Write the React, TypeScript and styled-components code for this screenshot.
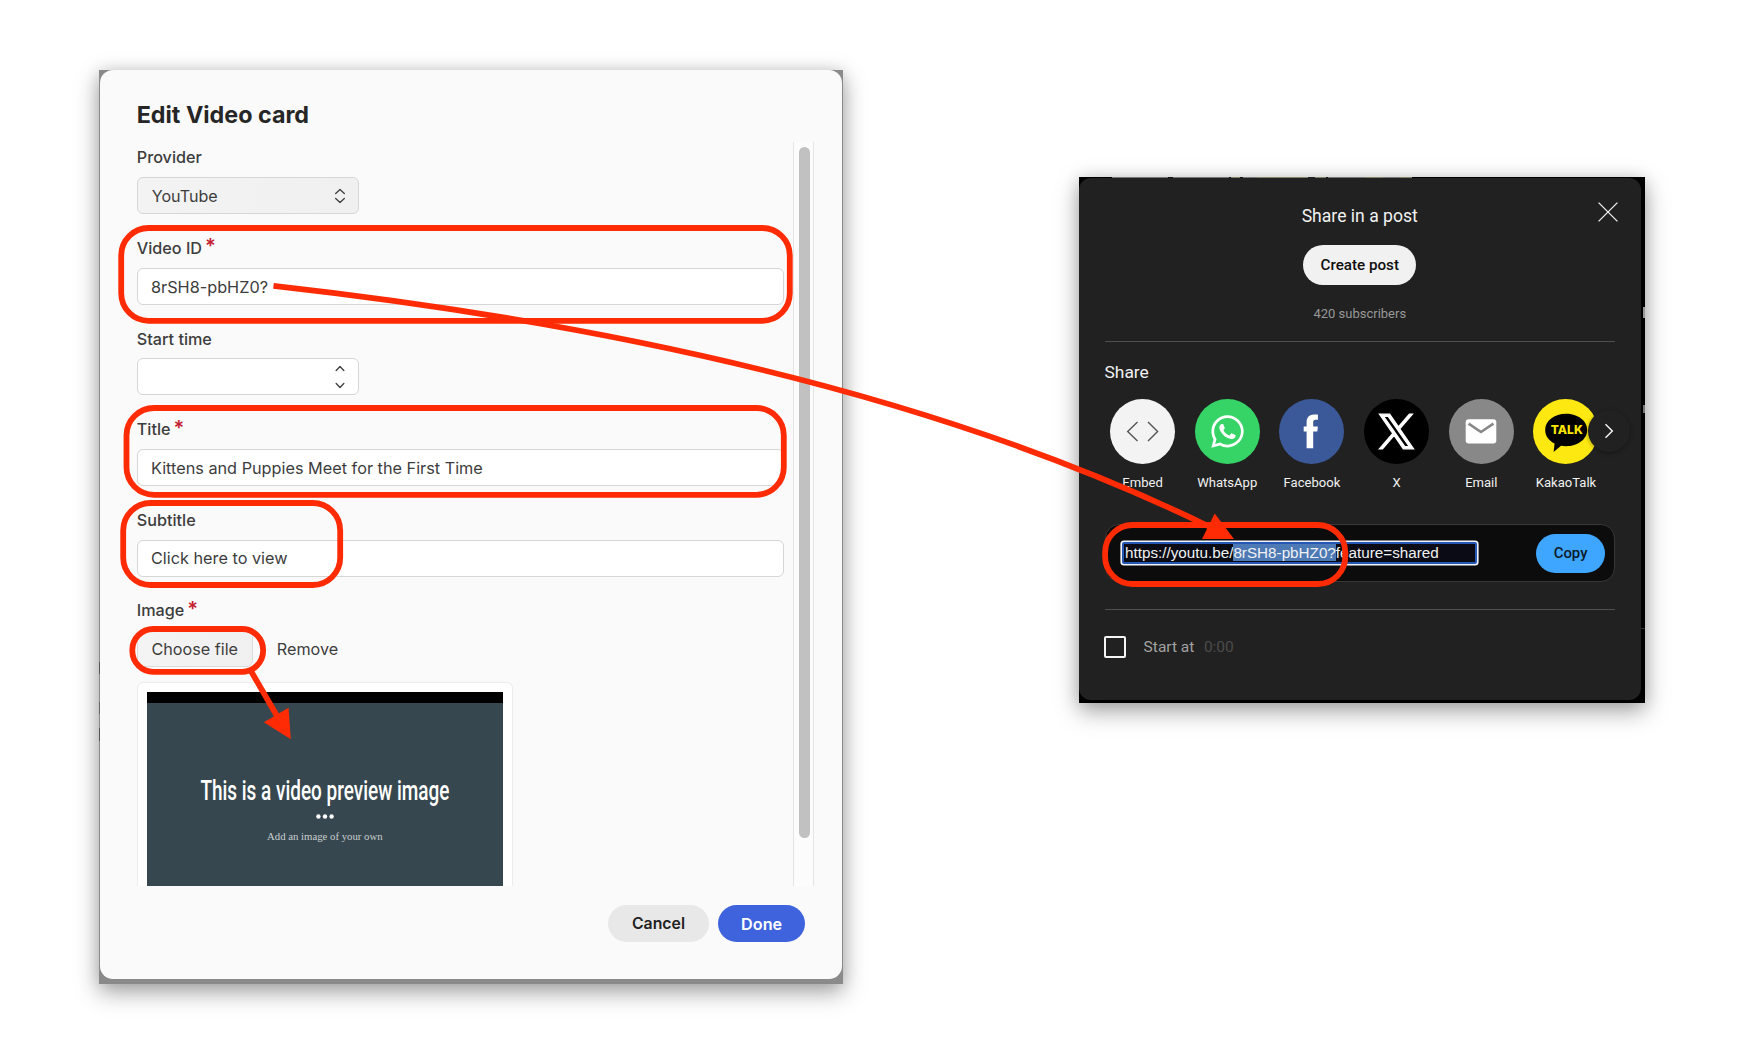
import React from 'react';
import styled, { createGlobalStyle } from 'styled-components';
import { FaWhatsapp } from 'react-icons/fa';

const RED = '#fe2b04';

const GlobalStyle = createGlobalStyle`
  * { box-sizing: border-box; }
  body { margin: 0; background: #fff; }
`;

const Stage = styled.main`
  position: relative;
  display: flex;
  align-items: flex-start;
  gap: 236px;
  width: 1759px;
  height: 1047px;
  padding: 70px 0 0 99px;
  overflow: hidden;
  background: #fff;
`;

/* ---------- Edit Video card ---------- */

const EditCapture = styled.section`
  width: 744px;
  height: 914px;
  padding: 0 1px 5px;
  background:
    linear-gradient(#555, #555) 0 592px / 1px 12px no-repeat,
    linear-gradient(#666, #666) 0 632px / 1px 12px no-repeat,
    linear-gradient(#555, #555) 0 658px / 1px 13px no-repeat,
    #8a8a8a;
  box-shadow: 0 8px 22px rgba(0, 0, 0, 0.36), 0 0 14px rgba(0, 0, 0, 0.1);
  font-family: Inter, "Liberation Sans", sans-serif;
  color: #3d3d3d;
`;

const EditDialog = styled.div`
  display: flex;
  flex-direction: column;
  height: 909px;
  border-radius: 13px;
  background: #fafafa;
`;

const DialogTitle = styled.h1`
  height: 72px;
  margin: 0;
  padding: 32px 0 0 36.7px;
  font-size: 23.3px;
  font-weight: 700;
  line-height: 25px;
  color: #262626;
`;

const DialogBody = styled.div`
  display: flex;
  height: 744px;
`;

const Form = styled.div`
  width: 693px;
  padding: 5.4px 0 0 36.8px;
  overflow: hidden;
`;

const Field = styled.div`
  display: flex;
  flex-direction: column;
  gap: 9.8px;
  width: 647px;
  margin-bottom: 23.8px;
`;

const FieldLabel = styled.label`
  font-size: 16.2px;
  font-weight: 500;
  line-height: 20px;
  height: 20px;
  white-space: nowrap;
`;

const Required = styled.span`
  position: relative;
  top: -0.5px;
  margin-left: 3px;
  font-size: 20px;
  font-weight: 600;
  line-height: 0;
  color: #c5202f;
`;

const Control = styled.div<{ $narrow?: boolean; $select?: boolean }>`
  display: flex;
  align-items: center;
  justify-content: space-between;
  width: ${(p) => (p.$narrow ? '222.5px' : '100%')};
  height: 37px;
  padding: 0.6px 13.3px 0 ${(p) => (p.$select ? '13.9px' : '13.2px')};
  border: 1px solid #d6d6d6;
  border-radius: 6px;
  background: ${(p) => (p.$select ? 'linear-gradient(90deg, #f3f3f3, #f0f0f0)' : '#fff')};
  font-size: ${(p) => (p.$select ? '16.1px' : '16.25px')};
  white-space: nowrap;
`;

const FileRow = styled.div`
  display: flex;
  align-items: center;
  height: 37px;
  font-size: 16.2px;
`;

const ChooseButton = styled.span`
  width: 116px;
  height: 37px;
  padding-left: 13.6px;
  border: 1px solid #dcdcdc;
  border-radius: 6px;
  background: linear-gradient(90deg, #f4f4f4, #f0f0f0);
  line-height: 36px;
`;

const RemoveButton = styled.span`
  margin-left: 24px;
`;

const PreviewFrame = styled.div`
  width: 376px;
  height: 230px;
  margin-top: -9.1px;
  padding: 9px;
  border: 1px solid #ececec;
  border-radius: 6px;
  background: #fff;
`;

const Preview = styled.div`
  display: flex;
  flex-direction: column;
  align-items: center;
  height: 211px;
  border-top: 11px solid #000;
  background: #37474f;
  color: #fff;
`;

const PreviewTitle = styled.div`
  margin-top: 72px;
  font: 500 28px/32px Roboto, "Liberation Sans", sans-serif;
  white-space: nowrap;
  transform: scaleX(0.677);
`;

const PreviewDots = styled.svg`
  display: block;
  width: 18px;
  height: 5px;
  margin-top: 7.2px;
`;

const PreviewCaption = styled.div`
  margin-top: 8.8px;
  font: 10.75px/16px "Liberation Serif", serif;
  color: #c9ced0;
`;

const Track = styled.div`
  width: 21px;
  padding: 5px 0 0 4.5px;
  border: solid #e4e4e4;
  border-width: 0 1px;
  background: #fcfcfc;
`;

const Thumb = styled.div`
  width: 11.5px;
  height: 690.5px;
  border-radius: 6px;
  background: #c1c1c1;
`;

const DialogFooter = styled.footer`
  display: flex;
  justify-content: flex-end;
  gap: 9px;
  padding: 19px 36.8px 0 0;
`;

const PillButton = styled.button<{ $primary?: boolean }>`
  width: ${(p) => (p.$primary ? '87.2px' : '101px')};
  height: 37px;
  padding: 0;
  border: 0;
  border-radius: 19px;
  background: ${(p) => (p.$primary ? '#3e63dd' : '#e8e8e8')};
  color: ${(p) => (p.$primary ? '#fff' : '#222')};
  font: ${(p) => (p.$primary ? '600 16.2px' : '600 15.8px')} Inter, "Liberation Sans", sans-serif;
`;

/* ---------- Share panel ---------- */

const ShareCapture = styled.section`
  width: 566px;
  height: 526px;
  margin-top: 107px;
  padding-right: 4px;
  background:
    linear-gradient(#999, #999) 564px 130px / 2px 11px no-repeat,
    linear-gradient(#777, #777) 564px 228px / 2px 8px no-repeat,
    linear-gradient(#333, #333) 562px 451px / 4px 1px no-repeat,
    #000;
  box-shadow: 0 8px 22px rgba(0, 0, 0, 0.36), 0 0 14px rgba(0, 0, 0, 0.1);
  font-family: Roboto, "Liberation Sans", sans-serif;
  color: #f1f1f1;
`;

const PageStrip = styled.div`
  width: 300px;
  height: 1px;
  margin-left: 33px;
  background: linear-gradient(
    90deg,
    #777 0 56px, #111 56px 61px, #777 61px 117px, #111 117px 119px, #85836a 119px 128px,
    #111 128px 131px, #777 131px 145px, #85836a 145px 196px, #222 196px 203px, #85836a 203px 214px,
    #111 214px 216px, #777 216px 253px, #85836a 253px 271px, #777 271px 288px, #85836a 288px
  );
`;

const SharePanel = styled.div`
  position: relative;
  display: flex;
  flex-direction: column;
  align-items: center;
  height: 522px;
  padding: 27.3px 26px 0 25.5px;
  border-radius: 12px;
  background: #212121;
`;

const CloseIcon = styled.svg`
  position: absolute;
  top: 23.7px;
  right: 22.8px;
  width: 20px;
  height: 20px;
`;

const ShareTitle = styled.h2`
  margin: 0;
  font-size: 17.6px;
  font-weight: 400;
  line-height: 22px;
`;

const CreatePost = styled.button`
  width: 113px;
  height: 39.5px;
  margin-top: 17.9px;
  padding: 0;
  border: 0;
  border-radius: 20px;
  background: #f1f1f1;
  font: 500 15.2px Roboto, sans-serif;
  color: #0f0f0f;
`;

const Subscribers = styled.div`
  margin-top: 21px;
  font-size: 13px;
  line-height: 16px;
  color: #989898;
`;

const Divider = styled.hr<{ $top: number }>`
  flex: none;
  width: 100%;
  height: 1px;
  margin: ${(p) => p.$top}px 0 0;
  border: 0;
  background: #505050;
`;

const ShareHeading = styled.h3`
  align-self: flex-start;
  margin: 18.4px 0 0 0;
  font-size: 17.4px;
  font-weight: 400;
  line-height: 22px;
`;

const Targets = styled.div`
  position: relative;
  align-self: flex-start;
  display: flex;
  margin: 16.2px 0 0 -4.3px;
`;

const Target = styled.div`
  display: flex;
  flex-direction: column;
  align-items: center;
  gap: 11.2px;
  width: 84.7px;
  font-size: 13.05px;
  line-height: 16px;
`;

const Disc = styled.div<{ $color: string }>`
  display: flex;
  align-items: center;
  justify-content: center;
  width: 65px;
  height: 65px;
  border-radius: 50%;
  background: ${(p) => p.$color};
  color: #fff;
  svg { display: block; }
`;

const NextButton = styled.div`
  position: absolute;
  left: 487.3px;
  top: 11.5px;
  display: flex;
  align-items: center;
  justify-content: center;
  width: 42px;
  height: 42px;
  border-radius: 50%;
  background: #212121;
  box-shadow: 0 1px 4px rgba(0, 0, 0, 0.35);
`;

const LinkBox = styled.div`
  display: flex;
  align-items: center;
  justify-content: space-between;
  flex: none;
  width: 100%;
  height: 58px;
  margin-top: 33.2px;
  padding: 0 8.7px 0 16.6px;
  border: 1px solid #383838;
  border-radius: 14px;
  background: #0c0c0c;
`;

const LinkInput = styled.div`
  width: 354.5px;
  height: 22px;
  padding-left: 0.9px;
  border: 2px solid #2458b4;
  border-radius: 2px;
  box-shadow: 0 0 0 1.6px #f2f4fa;
  background: #0a0b14;
  font: 15.24px/18px "Liberation Sans", Arial, sans-serif;
  white-space: nowrap;
`;

const Selected = styled.span`
  background: #4d79b5;
`;

const CopyButton = styled.button`
  width: 69.5px;
  height: 39px;
  padding: 0;
  border: 0;
  border-radius: 20px;
  background: #3ea6ff;
  font: 500 14.9px Roboto, sans-serif;
  color: #0c1a28;
`;

const StartRow = styled.div`
  align-self: flex-start;
  display: flex;
  align-items: center;
  margin-top: 26.2px;
  font-size: 15.5px;
  color: #a2a2a2;
`;

const Checkbox = styled.span`
  width: 22px;
  height: 22px;
  margin: 0 17.3px 0 -0.2px;
  border: 2px solid #f5f5f5;
  border-radius: 2px;
`;

const StartTime = styled.span`
  margin-left: 9.5px;
  color: #4c4c4c;
`;

/* ---------- Annotation layer ---------- */

const Markup = styled.svg`
  position: absolute;
  inset: 0;
  width: 1759px;
  height: 1047px;
  pointer-events: none;
`;

const Chevrons = ({ spread, width }: { spread: number; width: number }) => {
  const w = width / 2;
  return (
    <svg width="10" height="28" viewBox="-5 -14 10 28" fill="none" stroke="#444" strokeWidth="1.4" strokeLinecap="round" strokeLinejoin="round">
      <path d={`M${-w} ${-spread + 4}L0 ${-spread}L${w} ${-spread + 4}`} />
      <path d={`M${-w} ${spread - 4}L0 ${spread}L${w} ${spread - 4}`} />
    </svg>
  );
};

const EmbedIcon = () => (
  <svg width="65" height="65" fill="none" stroke="#555" strokeWidth="1.4">
    <path d="M27.5 23L17.7 32.5L27.5 42M38 23L47.6 32.5L38 42" />
  </svg>
);

const FacebookIcon = () => (
  <svg width="65" height="65" fill="#fff">
    <path d="M27.6 49.3V32.6H24.7V27.4H27.6V23.4C27.6 18.5 30.3 15.6 35 15.6H38.9V20.8H36.6C34.7 20.8 34.2 21.8 34.2 23.6V27.4H38.9L38.3 32.6H34.2V49.3Z" />
  </svg>
);

const XIcon = () => (
  <svg width="37" height="37" viewBox="-40 -40 1280 1307" fill="#fff" stroke="#fff" strokeWidth="48">
    <path d="M714.163 519.284L1160.89 0H1055.03L667.137 450.887L357.328 0H0L468.492 681.821L0 1226.37H105.866L515.491 750.218L842.672 1226.37H1200L714.137 519.284ZM569.165 687.828L521.697 619.934L144.011 79.6944H306.615L611.412 515.685L658.88 583.579L1055.08 1150.3H892.476L569.165 687.828Z" />
  </svg>
);

const EmailIcon = () => (
  <svg width="65" height="65">
    <rect x="16.7" y="20.2" width="30.6" height="24.2" rx="3" fill="#fff" />
    <path d="M19.6 24.6L32 33L44.4 24.6" fill="none" stroke="#888" strokeWidth="2.6" />
  </svg>
);

const KakaoIcon = () => (
  <svg width="65" height="65">
    <path d="M33 14.8C44.8 14.8 54.2 21.8 54.2 31C54.2 40.2 44.8 47.2 33 47.2C31.2 47.2 29.6 47.1 28 46.8L20.6 53L21.6 44.6C15.8 41.8 12.2 36.9 12.2 31C12.2 21.8 21.3 14.8 33 14.8Z" fill="#000" />
    <text x="17.8" y="35.4" textLength="32" lengthAdjust="spacingAndGlyphs" fontFamily="Inter, sans-serif" fontWeight="800" fontSize="12.2" fill="#fbe600">TALK</text>
  </svg>
);

const targets = [
  { name: 'Embed', color: '#f3f3f3', icon: <EmbedIcon /> },
  { name: 'WhatsApp', color: '#36d366', icon: <FaWhatsapp size={37} /> },
  { name: 'Facebook', color: '#3b5998', icon: <FacebookIcon /> },
  { name: 'X', color: '#000', icon: <XIcon /> },
  { name: 'Email', color: '#888', icon: <EmailIcon /> },
  { name: 'KakaoTalk', color: '#fde812', icon: <KakaoIcon /> },
];

const outlines = [
  { x: 121.2, y: 228, w: 668.6, h: 92.8, r: 27.5 },
  { x: 126.5, y: 408, w: 657.3, h: 86.8, r: 27.5 },
  { x: 123.2, y: 503, w: 217, h: 82, r: 27.5 },
  { x: 132.3, y: 629, w: 130.8, h: 42.8, r: 21 },
  { x: 1105.1, y: 525, w: 240.2, h: 59, r: 27.5 },
];

export default function App() {
  return (
    <Stage>
      <GlobalStyle />
      <EditCapture>
        <EditDialog>
          <DialogTitle>Edit Video card</DialogTitle>
          <DialogBody>
            <Form>
              <Field>
                <FieldLabel>Provider</FieldLabel>
                <Control $narrow $select>
                  YouTube
                  <Chevrons spread={6.5} width={8.6} />
                </Control>
              </Field>
              <Field>
                <FieldLabel>Video ID<Required>*</Required></FieldLabel>
                <Control>8rSH8-pbHZ0?</Control>
              </Field>
              <Field>
                <FieldLabel>Start time</FieldLabel>
                <Control $narrow>
                  <span />
                  <Chevrons spread={10.4} width={7.6} />
                </Control>
              </Field>
              <Field>
                <FieldLabel>Title<Required>*</Required></FieldLabel>
                <Control>Kittens and Puppies Meet for the First Time</Control>
              </Field>
              <Field>
                <FieldLabel>Subtitle</FieldLabel>
                <Control>Click here to view</Control>
              </Field>
              <Field>
                <FieldLabel>Image<Required>*</Required></FieldLabel>
                <FileRow>
                  <ChooseButton>Choose file</ChooseButton>
                  <RemoveButton>Remove</RemoveButton>
                </FileRow>
              </Field>
              <PreviewFrame>
                <Preview>
                  <PreviewTitle>This is a video preview image</PreviewTitle>
                  <PreviewDots viewBox="0 0 18 5" fill="#fff">
                    <circle cx="2.4" cy="2.5" r="2.2" />
                    <circle cx="9" cy="2.5" r="2.2" />
                    <circle cx="15.6" cy="2.5" r="2.2" />
                  </PreviewDots>
                  <PreviewCaption>Add an image of your own</PreviewCaption>
                </Preview>
              </PreviewFrame>
            </Form>
            <Track><Thumb /></Track>
          </DialogBody>
          <DialogFooter>
            <PillButton>Cancel</PillButton>
            <PillButton $primary>Done</PillButton>
          </DialogFooter>
        </EditDialog>
      </EditCapture>

      <ShareCapture>
        <PageStrip />
        <SharePanel>
          <CloseIcon viewBox="0 0 20 20" stroke="#f1f1f1" strokeWidth="1.3">
            <path d="M0.6 0.6L19.4 19.4M19.4 0.6L0.6 19.4" />
          </CloseIcon>
          <ShareTitle>Share in a post</ShareTitle>
          <CreatePost>Create post</CreatePost>
          <Subscribers>420 subscribers</Subscribers>
          <Divider $top={19.6} />
          <ShareHeading>Share</ShareHeading>
          <Targets>
            {targets.map((t) => (
              <Target key={t.name}>
                <Disc $color={t.color}>{t.icon}</Disc>
                {t.name}
              </Target>
            ))}
            <NextButton>
              <svg width="10" height="16" fill="none" stroke="#f1f1f1" strokeWidth="1.5">
                <path d="M1.5 1.2L8.3 8L1.5 14.8" />
              </svg>
            </NextButton>
          </Targets>
          <LinkBox>
            <LinkInput>
              https://youtu.be/<Selected>8rSH8-pbHZ0?</Selected>feature=shared
            </LinkInput>
            <CopyButton>Copy</CopyButton>
          </LinkBox>
          <Divider $top={26.8} />
          <StartRow>
            <Checkbox />
            Start at
            <StartTime>0:00</StartTime>
          </StartRow>
        </SharePanel>
      </ShareCapture>

      <Markup viewBox="0 0 1759 1047" fill="none" stroke={RED} strokeWidth="5.8">
        {outlines.map((o) => (
          <rect key={o.y} x={o.x} y={o.y} width={o.w} height={o.h} rx={o.r} />
        ))}
        <path d="M273.5 285.8Q848 350 1209 526.5" />
        <path d="M1214.7 513.5L1234 538.9H1202Z" fill={RED} stroke="none" />
        <path d="M251 671L277 716" />
        <path d="M290.8 739.3L263.8 722.3L288.6 707.7Z" fill={RED} stroke="none" />
      </Markup>
    </Stage>
  );
}
